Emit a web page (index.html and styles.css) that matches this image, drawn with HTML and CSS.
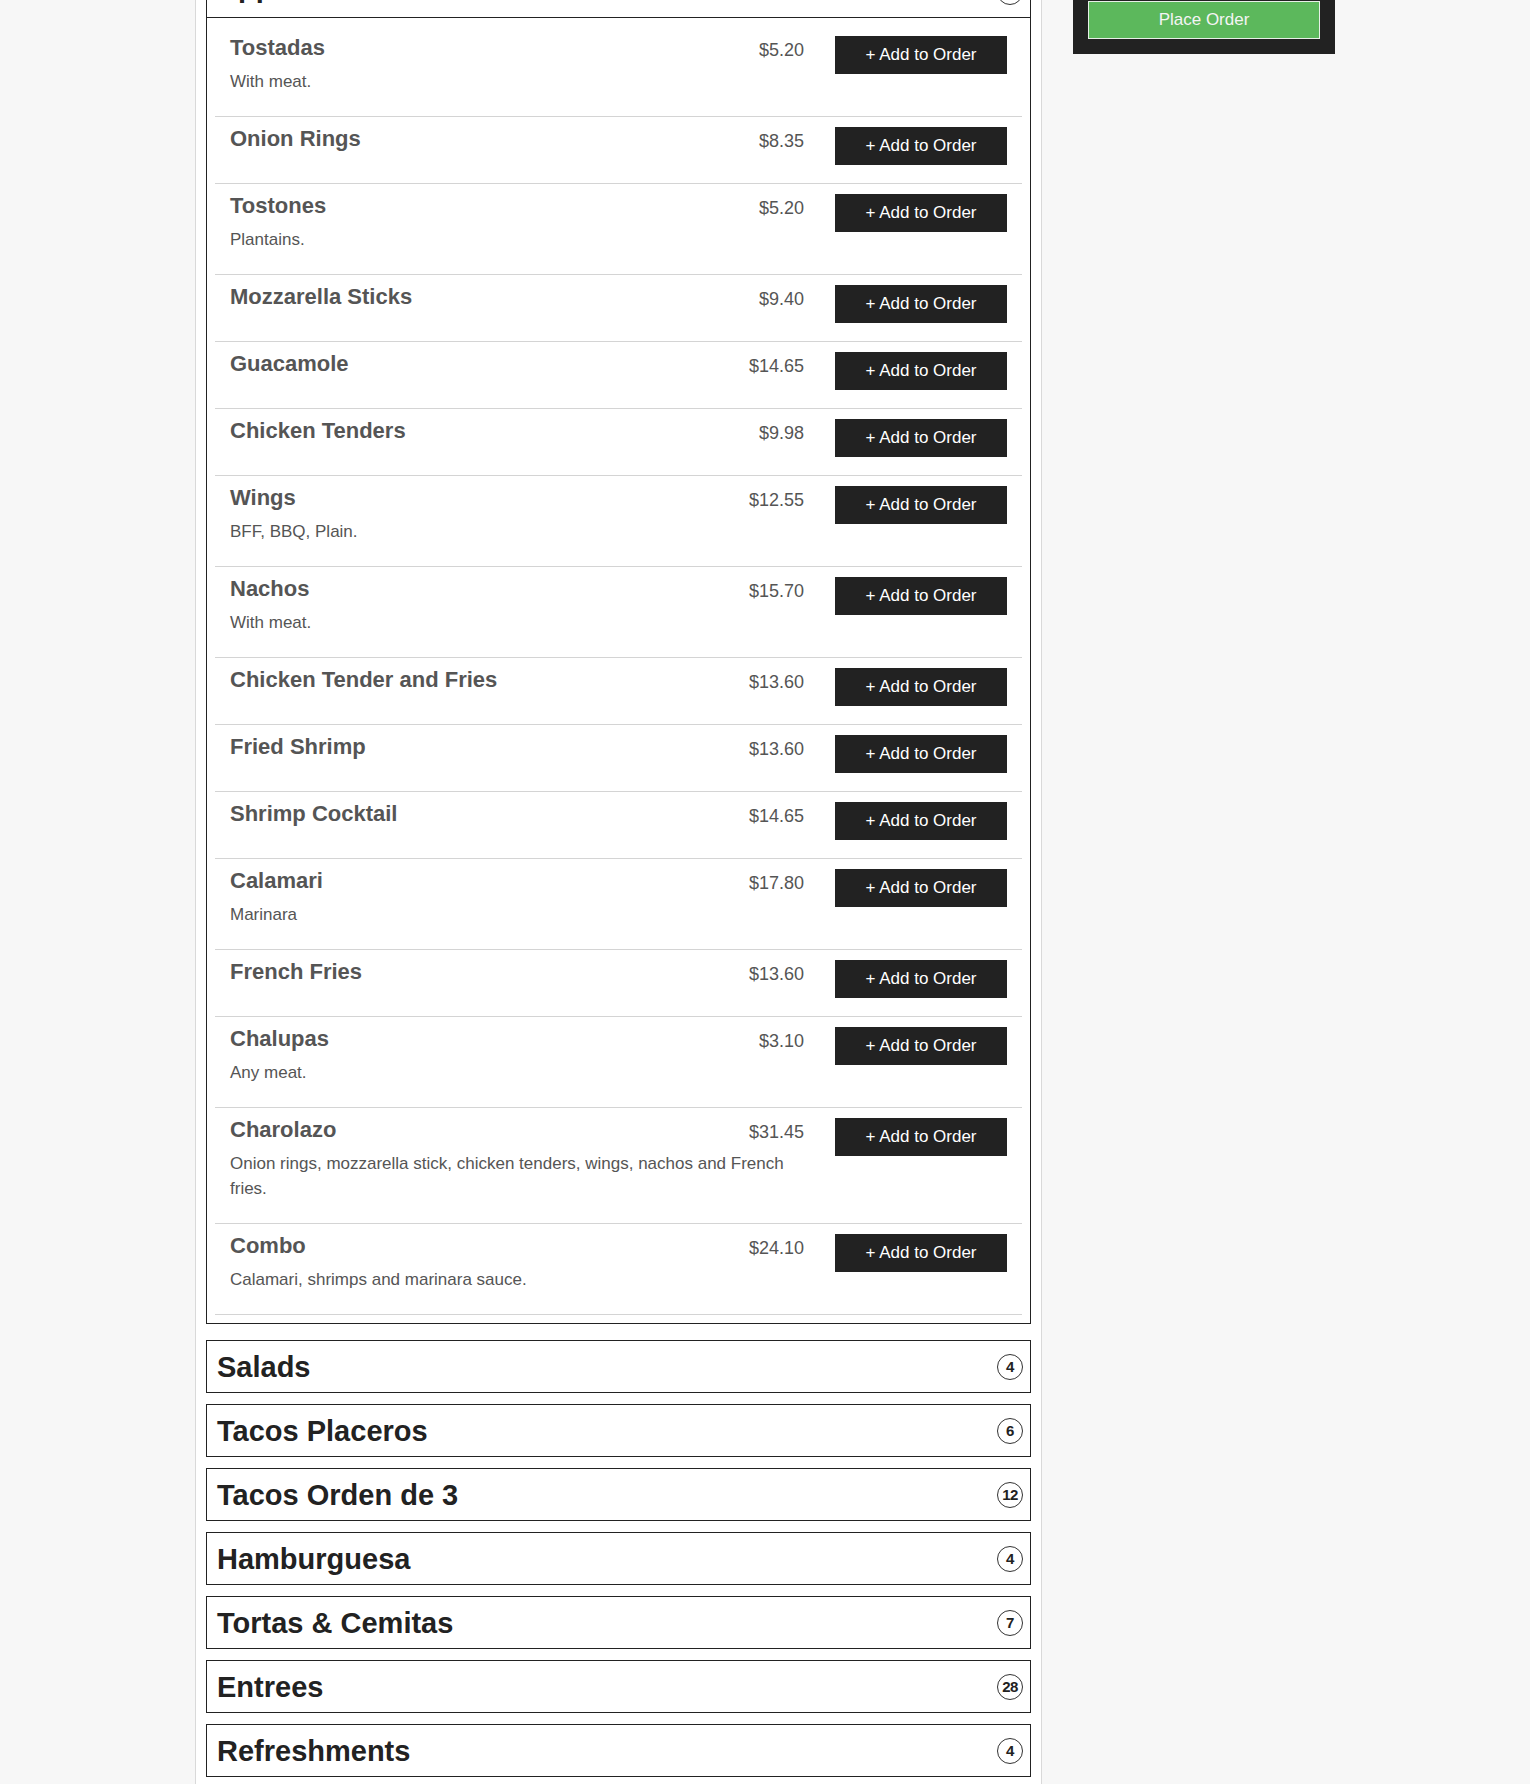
FILE: index.html
```html
<!DOCTYPE html>
<html lang="en">
<head>
<meta charset="utf-8">
<title>Menu</title>
<link rel="stylesheet" href="styles.css">
</head>
<body>
<div class="page">
  <main class="menu-col">
    <section class="panel panel-open">
      <div class="panel-head">
        <h2 class="panel-title">Appetizers</h2>
        <span class="badge">16</span>
      </div>
      <div class="panel-body">
        <div class="item">
          <div class="info">
            <div class="head"><h4 class="name">Tostadas</h4><span class="price">$5.20</span></div>
            <p class="desc">With meat.</p>
          </div>
          <button class="add">+ Add to Order</button>
        </div>
        <div class="item">
          <div class="info">
            <div class="head"><h4 class="name">Onion Rings</h4><span class="price">$8.35</span></div>
          </div>
          <button class="add">+ Add to Order</button>
        </div>
        <div class="item">
          <div class="info">
            <div class="head"><h4 class="name">Tostones</h4><span class="price">$5.20</span></div>
            <p class="desc">Plantains.</p>
          </div>
          <button class="add">+ Add to Order</button>
        </div>
        <div class="item">
          <div class="info">
            <div class="head"><h4 class="name">Mozzarella Sticks</h4><span class="price">$9.40</span></div>
          </div>
          <button class="add">+ Add to Order</button>
        </div>
        <div class="item">
          <div class="info">
            <div class="head"><h4 class="name">Guacamole</h4><span class="price">$14.65</span></div>
          </div>
          <button class="add">+ Add to Order</button>
        </div>
        <div class="item">
          <div class="info">
            <div class="head"><h4 class="name">Chicken Tenders</h4><span class="price">$9.98</span></div>
          </div>
          <button class="add">+ Add to Order</button>
        </div>
        <div class="item">
          <div class="info">
            <div class="head"><h4 class="name">Wings</h4><span class="price">$12.55</span></div>
            <p class="desc">BFF, BBQ, Plain.</p>
          </div>
          <button class="add">+ Add to Order</button>
        </div>
        <div class="item">
          <div class="info">
            <div class="head"><h4 class="name">Nachos</h4><span class="price">$15.70</span></div>
            <p class="desc">With meat.</p>
          </div>
          <button class="add">+ Add to Order</button>
        </div>
        <div class="item">
          <div class="info">
            <div class="head"><h4 class="name">Chicken Tender and Fries</h4><span class="price">$13.60</span></div>
          </div>
          <button class="add">+ Add to Order</button>
        </div>
        <div class="item">
          <div class="info">
            <div class="head"><h4 class="name">Fried Shrimp</h4><span class="price">$13.60</span></div>
          </div>
          <button class="add">+ Add to Order</button>
        </div>
        <div class="item">
          <div class="info">
            <div class="head"><h4 class="name">Shrimp Cocktail</h4><span class="price">$14.65</span></div>
          </div>
          <button class="add">+ Add to Order</button>
        </div>
        <div class="item">
          <div class="info">
            <div class="head"><h4 class="name">Calamari</h4><span class="price">$17.80</span></div>
            <p class="desc">Marinara</p>
          </div>
          <button class="add">+ Add to Order</button>
        </div>
        <div class="item">
          <div class="info">
            <div class="head"><h4 class="name">French Fries</h4><span class="price">$13.60</span></div>
          </div>
          <button class="add">+ Add to Order</button>
        </div>
        <div class="item">
          <div class="info">
            <div class="head"><h4 class="name">Chalupas</h4><span class="price">$3.10</span></div>
            <p class="desc">Any meat.</p>
          </div>
          <button class="add">+ Add to Order</button>
        </div>
        <div class="item">
          <div class="info">
            <div class="head"><h4 class="name">Charolazo</h4><span class="price">$31.45</span></div>
            <p class="desc">Onion rings, mozzarella stick, chicken tenders, wings, nachos and French fries.</p>
          </div>
          <button class="add">+ Add to Order</button>
        </div>
        <div class="item">
          <div class="info">
            <div class="head"><h4 class="name">Combo</h4><span class="price">$24.10</span></div>
            <p class="desc">Calamari, shrimps and marinara sauce.</p>
          </div>
          <button class="add">+ Add to Order</button>
        </div>
      </div>
    </section>

    <section class="panel"><div class="panel-head"><h2 class="panel-title">Salads</h2><span class="badge">4</span></div></section>
    <section class="panel"><div class="panel-head"><h2 class="panel-title">Tacos Placeros</h2><span class="badge">6</span></div></section>
    <section class="panel"><div class="panel-head"><h2 class="panel-title">Tacos Orden de 3</h2><span class="badge">12</span></div></section>
    <section class="panel"><div class="panel-head"><h2 class="panel-title">Hamburguesa</h2><span class="badge">4</span></div></section>
    <section class="panel"><div class="panel-head"><h2 class="panel-title">Tortas &amp; Cemitas</h2><span class="badge">7</span></div></section>
    <section class="panel"><div class="panel-head"><h2 class="panel-title">Entrees</h2><span class="badge">28</span></div></section>
    <section class="panel"><div class="panel-head"><h2 class="panel-title">Refreshments</h2><span class="badge">4</span></div></section>
  </main>

  <aside class="order-box">
    <button class="place">Place Order</button>
  </aside>
</div>
</body>
</html>
```

FILE: styles.css
```css
* { box-sizing: border-box; }

html, body {
  margin: 0;
  padding: 0;
}

body {
  background: #f7f7f7;
  font-family: "Liberation Sans", Arial, Helvetica, sans-serif;
  color: #555;
}

.page {
  width: 1140px;
  margin: -46px auto 0;
  display: grid;
  grid-template-columns: 847px 262px;
  column-gap: 31px;
  align-items: start;
}

.menu-col {
  background: #fff;
  border: 1px solid #d9d9d9;
  padding: 10px 10px 40px;
}

.panel {
  border: 1px solid #222;
  background: #fff;
  margin-bottom: 11px;
}

.panel-open {
  margin-bottom: 16px;
}

.panel-head {
  height: 51px;
  display: flex;
  align-items: center;
  justify-content: space-between;
  padding: 0 7px 0 10px;
}

.panel-open .panel-head {
  height: 52px;
  border-bottom: 1px solid #222;
}

.panel-title {
  margin: 0;
  font-size: 29px;
  line-height: 32px;
  font-weight: bold;
  color: #222;
}

.panel-open .panel-title {
  margin-bottom: 10px;
}

.badge {
  width: 26px;
  height: 26px;
  border: 1px solid #333;
  border-radius: 50%;
  display: flex;
  align-items: center;
  justify-content: center;
  font-size: 15px;
  font-weight: bold;
  color: #222;
  letter-spacing: -0.5px;
}

.panel-body {
  padding: 8px;
}

.item {
  display: flex;
  align-items: flex-start;
  padding: 10px 15px 18px;
  border-bottom: 1px solid #d4d4d4;
}

.info {
  flex: 1;
  min-width: 0;
}

.head {
  display: flex;
  justify-content: space-between;
  align-items: flex-start;
}

.name {
  margin: 0;
  font-size: 22px;
  line-height: 24px;
  font-weight: bold;
  color: #555;
}

.price {
  font-size: 18px;
  line-height: 22px;
  padding-top: 3px;
  color: #555;
}

.desc {
  margin: 8px 0 4px;
  font-size: 17px;
  line-height: 25px;
  color: #555;
}

.add {
  flex: none;
  width: 172px;
  height: 38px;
  margin-left: 31px;
  border: none;
  border-radius: 0;
  background: #222;
  color: #fff;
  font-family: "Liberation Sans", Arial, Helvetica, sans-serif;
  font-size: 17px;
  cursor: pointer;
}

.order-box {
  background: #222;
  padding: 47px 15px 15px;
}

.place {
  display: block;
  width: 100%;
  height: 38px;
  border: 1px solid #e8f0e8;
  border-radius: 0;
  background: #5cb85c;
  color: #f4f4f4;
  font-family: "Liberation Sans", Arial, Helvetica, sans-serif;
  font-size: 17px;
  cursor: pointer;
}
```
